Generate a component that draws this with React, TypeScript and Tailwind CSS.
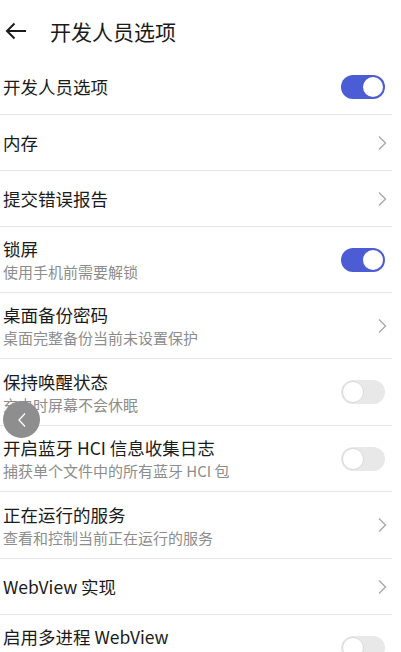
type Row = {
  title: string;
  desc?: string;
  kind: 'on' | 'off' | 'link';
  h: string;
  spacer?: boolean;
};

const rows: Row[] = [
  { title: '开发人员选项', kind: 'on', h: 'h-[56px]' },
  { title: '内存', kind: 'link', h: 'h-[56px]' },
  { title: '提交错误报告', kind: 'link', h: 'h-[56px]' },
  { title: '锁屏', desc: '使用手机前需要解锁', kind: 'on', h: 'h-[66px]' },
  { title: '桌面备份密码', desc: '桌面完整备份当前未设置保护', kind: 'link', h: 'h-[66px]' },
  { title: '保持唤醒状态', desc: '充电时屏幕不会休眠', kind: 'off', h: 'h-[67px]' },
  { title: '开启蓝牙 HCI 信息收集日志', desc: '捕获单个文件中的所有蓝牙 HCI 包', kind: 'off', h: 'h-[66px]' },
  { title: '正在运行的服务', desc: '查看和控制当前正在运行的服务', kind: 'link', h: 'h-[67px]' },
  { title: 'WebView 实现', kind: 'link', h: 'h-[56px]' },
  { title: '启用多进程 WebView', kind: 'off', h: 'h-[66px]', spacer: true },
];

function Toggle({ on }: { on: boolean }) {
  return (
    <div
      className={
        on
          ? 'flex h-[24px] w-[44px] items-center justify-end rounded-full bg-[#4b5cd5] px-[2px]'
          : 'flex h-[24px] w-[44px] items-center justify-start rounded-full bg-[#e8e8e8] px-[1px]'
      }
    >
      <div
        className={
          on
            ? 'h-[20px] w-[20px] rounded-full bg-white'
            : 'h-[22px] w-[22px] rounded-full border border-[#dadada] bg-white'
        }
      />
    </div>
  );
}

function Chevron() {
  return (
    <svg width="10" height="16" viewBox="0 0 10 16" className="-mr-[2px]">
      <path d="M2 1.5 L8.5 8 L2 14.5" fill="none" stroke="#a9a9a9" strokeWidth="1.4" />
    </svg>
  );
}

export default function App() {
  return (
    <div
      className="relative h-[652px] w-[401px] overflow-hidden bg-white text-[#1b1b1b]"
      style={{ fontFamily: '"Noto Sans CJK SC", "Noto Sans", sans-serif' }}
    >
      <div className="flex h-[59px] items-center pl-[5px] pt-[3px]">
        <svg width="22" height="18" viewBox="0 0 22 18">
          <path d="M9.5 1.5 L2 9 L9.5 16.5 M2 9 H21" fill="none" stroke="#1b1b1b" strokeWidth="2" />
        </svg>
        <h1 className="ml-[23px] text-[21px] leading-none">开发人员选项</h1>
      </div>

      <div className="pr-[9px]">
        {rows.map((r) => (
          <div
            key={r.title}
            className={`flex items-center justify-between border-b border-[#e6e6e6] pl-[3px] pr-[7px] ${r.h}`}
          >
            <div className="flex flex-col">
              <span className="text-[17.5px] leading-[24px]">{r.title}</span>
              {r.desc && <span className="text-[15px] leading-[21px] text-[#8d8d8d]">{r.desc}</span>}
              {r.spacer && <div className="h-[21px]" />}
            </div>
            {r.kind === 'link' ? <Chevron /> : <Toggle on={r.kind === 'on'} />}
          </div>
        ))}
      </div>

      {/* floating back bubble */}
      <div className="absolute left-[3px] top-[401px] flex h-[37px] w-[37px] items-center justify-center rounded-full bg-[#8e8e8e]">
        <svg width="10" height="16" viewBox="0 0 10 16">
          <path d="M8 1.5 L2 8 L8 14.5" fill="none" stroke="#ffffff" strokeWidth="1.3" />
        </svg>
      </div>
    </div>
  );
}
